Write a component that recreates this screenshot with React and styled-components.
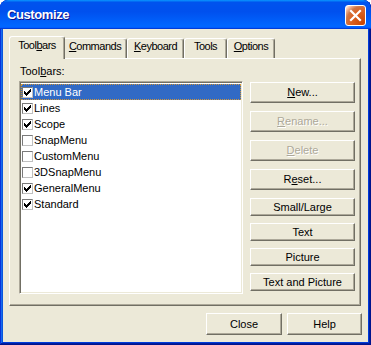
import React from 'react';
import styled, { createGlobalStyle } from 'styled-components';

const Global = createGlobalStyle`
  html, body { margin: 0; padding: 0; background: #ffffff; }
  body { font-family: "Liberation Sans", Arial, sans-serif; font-size: 11px; }
  * { box-sizing: border-box; }
`;

const Window = styled.div`
  width: 371px;
  height: 345px;
  display: flex;
  flex-direction: column;
  background: #0831d9;
  border-radius: 8px 8px 0 0;
  overflow: hidden;
  box-shadow: inset -1px -1px #00138c, inset 1px 1px #0831d9, inset -2px -2px #001ea0,
    inset 2px 2px #166aee, inset -3px -3px #003bda, inset 3px 3px #0855dd;
`;

const TitleBar = styled.div`
  height: 29px;
  flex: none;
  display: flex;
  align-items: center;
  padding: 0 5px 0 7px;
  border-radius: 8px 8px 0 0;
  background: linear-gradient(180deg, #0997ff, #0053ee 8%, #0050ee 40%, #0066ff 88%, #0066ff 93%, #005bff 95%, #003dd7 96%, #003dd7);
`;

const Title = styled.div`
  flex: 1;
  color: #ffffff;
  font: bold 13px/15px "Liberation Sans", Arial, sans-serif;
  letter-spacing: -0.4px;
  text-shadow: 1px 1px #0f1089;
`;

const CloseButton = styled.div`
  width: 21px;
  height: 21px;
  margin-top: 2px;
  border: 1px solid #ffffff;
  border-radius: 3px;
  display: flex;
  align-items: center;
  justify-content: center;
  background: radial-gradient(circle at 90% 90%, #cc4600 0%, #dc6527 55%, #cd7546 70%, #ffccb2 90%, #ffffff 100%);
`;

const Body = styled.div`
  flex: 1;
  margin: 0 3px 3px 3px;
  background: #ece9d8;
  display: flex;
  flex-direction: column;
  padding: 7px 6px 7px 6px;
`;

const TabRow = styled.div`
  height: 22px;
  display: flex;
  align-items: flex-end;
  padding-left: 2px;
`;

const Tab = styled.div`
  position: relative;
  z-index: ${p => (p.$active ? 2 : 1)};
  width: ${p => (p.$active ? p.$w + 4 : p.$w)}px;
  height: ${p => (p.$active ? 23 : 20)}px;
  margin: 0 ${p => (p.$active ? -2 : 0)}px ${p => (p.$active ? -1 : 0)}px;
  padding-top: ${p => (p.$active ? 2 : 1)}px;
  text-align: center;
  line-height: 13px;
  letter-spacing: -0.5px;
  white-space: nowrap;
  color: #000;
  background: #ece9d8;
  border-top: 1px solid #ffffff;
  border-left: 1px solid #ffffff;
  border-right: 1px solid #716f64;
  border-radius: 3px 3px 0 0;
  box-shadow: inset -1px 0 #aca899;
`;

const Panel = styled.div`
  width: 352px;
  height: 248px;
  border-top: 1px solid #ffffff;
  border-left: 1px solid #ffffff;
  border-right: 1px solid #716f64;
  border-bottom: 1px solid #716f64;
  box-shadow: inset -1px -1px #aca899;
  padding: 6px 0 0 9px;
`;

const Label = styled.div`
  height: 13px;
  line-height: 13px;
  margin: 0 0 3px 1px;
  color: #000;
`;

const PanelRow = styled.div`
  display: flex;
  align-items: flex-start;
`;

const List = styled.div`
  width: 224px;
  height: 213px;
  background: #ffffff;
  border: 1px solid;
  border-color: #aca899 #ffffff #ffffff #aca899;
  box-shadow: inset 1px 1px #716f64, inset -1px -1px #ece9d8;
  padding: 2px 1px 0 1px;
`;

const Row = styled.div`
  height: 16px;
  display: flex;
  align-items: flex-start;
  border: 1px dotted ${p => (p.$selected ? '#ce953a' : 'transparent')};
  background: ${p => (p.$selected ? '#316ac5' : 'transparent')};
  color: ${p => (p.$selected ? '#ffffff' : '#000000')};
`;

const Box = styled.div`
  width: 11px;
  height: 11px;
  margin-top: 2px;
  flex: none;
  background: #ffffff;
  border: 1px solid;
  border-color: #7a7a7a #c0c0c0 #c0c0c0 #7a7a7a;
  display: flex;
`;

const ItemText = styled.span`
  margin-left: 1px;
  line-height: 14px;
  white-space: nowrap;
`;

const ButtonCol = styled.div`
  width: 105px;
  margin: 1px 0 0 7px;
  display: flex;
  flex-direction: column;
`;

const Button = styled.div`
  width: ${p => (p.$w ? `${p.$w}px` : '100%')};
  height: ${p => p.$h}px;
  margin-top: ${p => p.$mt || 0}px;
  flex: none;
  display: flex;
  align-items: center;
  justify-content: center;
  background: #ece9d8;
  border: 1px solid;
  border-color: #ffffff #716f64 #716f64 #ffffff;
  box-shadow: inset -1px -1px #aca899;
  color: ${p => (p.$disabled ? '#aca899' : '#000000')};
  text-shadow: ${p => (p.$disabled ? '1px 1px #ffffff' : 'none')};
  line-height: 13px;
  white-space: nowrap;
`;

const BottomRow = styled.div`
  margin-top: 7px;
  display: flex;
  justify-content: flex-end;
  gap: 5px;
`;

const U = styled.span`
  text-decoration: underline;
`;

const Check = () => (
  <svg width="9" height="9" viewBox="0 0 9 9" shapeRendering="crispEdges">
    <g fill="#000">
      <rect x="7" y="1" width="1" height="1" />
      <rect x="6" y="2" width="2" height="1" />
      <rect x="1" y="3" width="1" height="1" />
      <rect x="5" y="3" width="3" height="1" />
      <rect x="1" y="4" width="2" height="1" />
      <rect x="4" y="4" width="3" height="1" />
      <rect x="1" y="5" width="5" height="1" />
      <rect x="2" y="6" width="3" height="1" />
      <rect x="3" y="7" width="1" height="1" />
    </g>
  </svg>
);

const CloseX = () => (
  <svg width="13" height="13" viewBox="0 0 13 13">
    <path d="M2 2 L11 11 M11 2 L2 11" stroke="#ffffff" strokeWidth="2.2" strokeLinecap="square" />
  </svg>
);

const tabs = [
  { label: <>Tool<U>b</U>ars</>, w: 52, active: true },
  { label: <><U>C</U>ommands</>, w: 64 },
  { label: <><U>K</U>eyboard</>, w: 57 },
  { label: <>Tools</>, w: 43 },
  { label: <><U>O</U>ptions</>, w: 48 },
];

const items = [
  { name: 'Menu Bar', checked: true, selected: true },
  { name: 'Lines', checked: true },
  { name: 'Scope', checked: true },
  { name: 'SnapMenu', checked: false },
  { name: 'CustomMenu', checked: false },
  { name: '3DSnapMenu', checked: false },
  { name: 'GeneralMenu', checked: true },
  { name: 'Standard', checked: true },
];

const buttons = [
  { label: <><U>N</U>ew...</>, h: 21, mt: 0 },
  { label: <><U>R</U>ename...</>, h: 21, mt: 8, disabled: true },
  { label: <><U>D</U>elete</>, h: 21, mt: 8, disabled: true },
  { label: <>R<U>e</U>set...</>, h: 21, mt: 8 },
  { label: 'Small/Large', h: 18, mt: 8 },
  { label: 'Text', h: 18, mt: 7 },
  { label: 'Picture', h: 18, mt: 7 },
  { label: 'Text and Picture', h: 18, mt: 7 },
];

export default function App() {
  return (
    <>
      <Global />
      <Window>
        <TitleBar>
          <Title>Customize</Title>
          <CloseButton>
            <CloseX />
          </CloseButton>
        </TitleBar>
        <Body>
          <TabRow>
            {tabs.map((t, i) => (
              <Tab key={i} $w={t.w} $active={t.active}>
                {t.label}
              </Tab>
            ))}
          </TabRow>
          <Panel>
            <Label>
              Tool<U>b</U>ars:
            </Label>
            <PanelRow>
              <List>
                {items.map(it => (
                  <Row key={it.name} $selected={it.selected}>
                    <Box>{it.checked && <Check />}</Box>
                    <ItemText>{it.name}</ItemText>
                  </Row>
                ))}
              </List>
              <ButtonCol>
                {buttons.map((b, i) => (
                  <Button key={i} $h={b.h} $mt={b.mt} $disabled={b.disabled}>
                    {b.label}
                  </Button>
                ))}
              </ButtonCol>
            </PanelRow>
          </Panel>
          <BottomRow>
            <Button $w={76} $h={22}>Close</Button>
            <Button $w={75} $h={22}>Help</Button>
          </BottomRow>
        </Body>
      </Window>
    </>
  );
}
